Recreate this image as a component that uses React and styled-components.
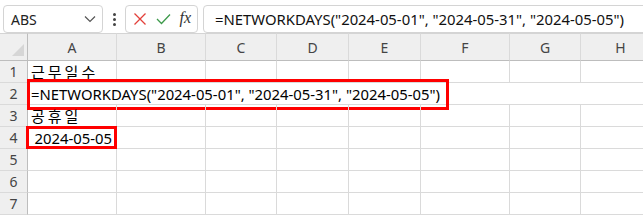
import styled, { createGlobalStyle } from "styled-components";

const GlobalStyle = createGlobalStyle`
  body {
    margin: 0;
    background: #ffffff;
    font-family: "Noto Sans", "Noto Sans CJK KR", sans-serif;
    overflow: hidden;
  }
`;

const columns = [
  { name: "A", width: 89 },
  { name: "B", width: 89 },
  { name: "C", width: 71 },
  { name: "D", width: 72 },
  { name: "E", width: 72 },
  { name: "F", width: 89 },
  { name: "G", width: 71 },
  { name: "H", width: 80 },
];

const formula = '=NETWORKDAYS("2024-05-01", "2024-05-31", "2024-05-05")';

const App = () => {
  return (
    <Page>
      <GlobalStyle />
      <Toolbar>
        <NameBox>
          <span>ABS</span>
          <svg width="12" height="8" viewBox="0 0 12 8">
            <path d="M1 1.5 L6 6.5 L11 1.5" fill="none" stroke="#555" strokeWidth="1.2" />
          </svg>
        </NameBox>
        <Dots>
          <i />
          <i />
          <i />
        </Dots>
        <FxBox>
          <svg width="14" height="14" viewBox="0 0 14 14">
            <path d="M1.5 1.5 L12.5 12.5 M12.5 1.5 L1.5 12.5" stroke="#e3403a" strokeWidth="1.3" />
          </svg>
          <svg width="15" height="12" viewBox="0 0 15 12">
            <path d="M1 6 L5.5 10.5 L14 1.5" fill="none" stroke="#3d9a4b" strokeWidth="1.3" />
          </svg>
          <Fx>fx</Fx>
        </FxBox>
        <FormulaBar>{formula}</FormulaBar>
      </Toolbar>

      <Sheet $cols={columns.map((c) => `${c.width}px`).join(" ")}>
        <Corner>
          <svg width="12" height="12" viewBox="0 0 12 12">
            <path d="M12 0 L12 12 L0 12 Z" fill="#d6d6d6" />
          </svg>
        </Corner>
        {columns.map((c) => (
          <ColHead key={c.name}>{c.name}</ColHead>
        ))}

        <RowHead>1</RowHead>
        <Cell $korean>근무일수</Cell>
        {columns.slice(1).map((c) => (
          <Cell key={"r1" + c.name} />
        ))}

        <RowHead>2</RowHead>
        <Cell $span={8} $noLine>
          <Mark>{formula}</Mark>
        </Cell>

        <RowHead>3</RowHead>
        <Cell $korean>공휴일</Cell>
        {columns.slice(1).map((c) => (
          <Cell key={"r3" + c.name} />
        ))}

        <RowHead>4</RowHead>
        <Cell $right $marked>
          2024-05-05
        </Cell>
        {columns.slice(1).map((c) => (
          <Cell key={"r4" + c.name} />
        ))}

        {[5, 6, 7].map((r) => (
          <Row key={r} r={r} />
        ))}
      </Sheet>
    </Page>
  );
};

const Row = ({ r }) => (
  <>
    <RowHead>{r}</RowHead>
    {columns.map((c) => (
      <Cell key={r + c.name} />
    ))}
  </>
);

export default App;

const Page = styled.div`
  width: 643px;
  height: 219px;
  overflow: hidden;
`;

const Toolbar = styled.div`
  display: flex;
  align-items: center;
  height: 33px;
  padding: 5px 0 0 3px;
  box-sizing: border-box;
  background: #ffffff;
`;

const Box = styled.div`
  height: 28px;
  box-sizing: border-box;
  border: 1px solid #d4d4d4;
  border-radius: 4px;
  background: #ffffff;
  display: flex;
  align-items: center;
`;

const NameBox = styled(Box)`
  width: 100px;
  padding: 0 6px 0 7px;
  justify-content: space-between;
  font-size: 14px;
  color: #222;
`;

const Dots = styled.div`
  width: 22px;
  display: flex;
  flex-direction: column;
  align-items: center;
  gap: 2px;

  i {
    width: 3px;
    height: 3px;
    border-radius: 50%;
    background: #444;
  }
`;

const FxBox = styled(Box)`
  width: 73px;
  padding: 0 6px 0 7px;
  justify-content: space-between;
`;

const Fx = styled.span`
  font-family: "Liberation Serif", serif;
  font-style: italic;
  font-size: 16px;
  color: #333;
  padding-bottom: 2px;
`;

const FormulaBar = styled(Box)`
  flex: 1;
  margin-left: 5px;
  margin-right: -10px;
  padding-left: 11px;
  font-size: 14.85px;
  color: #111;
  white-space: nowrap;
`;

const Sheet = styled.div`
  display: grid;
  grid-template-columns: 28px ${(p) => p.$cols};
  grid-template-rows: 28px repeat(7, 22px);
`;

const Corner = styled.div`
  background: #efefef;
  border-bottom: 1px solid #bdbdbd;
  border-right: 1px solid #bdbdbd;
  border-top: 1px solid #d4d4d4;
  display: flex;
  align-items: flex-end;
  justify-content: flex-end;
  padding: 0 3px 4px 0;
  box-sizing: border-box;
`;

const ColHead = styled.div`
  background: #efefef;
  border-top: 1px solid #d4d4d4;
  border-bottom: 1px solid #bdbdbd;
  border-right: 1px solid #dadada;
  box-sizing: border-box;
  display: flex;
  align-items: center;
  justify-content: center;
  font-size: 14px;
  color: #444;
`;

const RowHead = styled.div`
  background: #efefef;
  border-right: 1px solid #bdbdbd;
  border-bottom: 1px solid #dadada;
  box-sizing: border-box;
  display: flex;
  align-items: center;
  justify-content: center;
  font-size: 14px;
  color: #444;
`;

const Cell = styled.div`
  position: relative;
  grid-column: span ${(p) => p.$span || 1};
  border-right: ${(p) => (p.$noLine ? "none" : "1px solid #dadada")};
  border-bottom: 1px solid #dadada;
  box-sizing: border-box;
  display: flex;
  align-items: center;
  justify-content: ${(p) => (p.$right ? "flex-end" : "flex-start")};
  padding: ${(p) => (p.$right ? "0 4px 0 3px" : "0 3px")};
  font-family: ${(p) =>
    p.$korean ? '"Noto Sans CJK KR", sans-serif' : '"Noto Sans", sans-serif'};
  font-size: ${(p) => (p.$korean ? "15px" : "14.85px")};
  letter-spacing: ${(p) => (p.$korean ? "3px" : "normal")};
  color: #000;
  white-space: nowrap;

  ${(p) =>
    p.$marked &&
    `
    &::after {
      content: "";
      position: absolute;
      inset: -1px -1px -1px -2px;
      border: 3px solid #ff0000;
    }
  `}
`;

const Mark = styled.span`
  position: relative;

  &::after {
    content: "";
    position: absolute;
    top: -5px;
    bottom: -6px;
    left: -4px;
    right: -9px;
    border: 3px solid #ff0000;
  }
`;
